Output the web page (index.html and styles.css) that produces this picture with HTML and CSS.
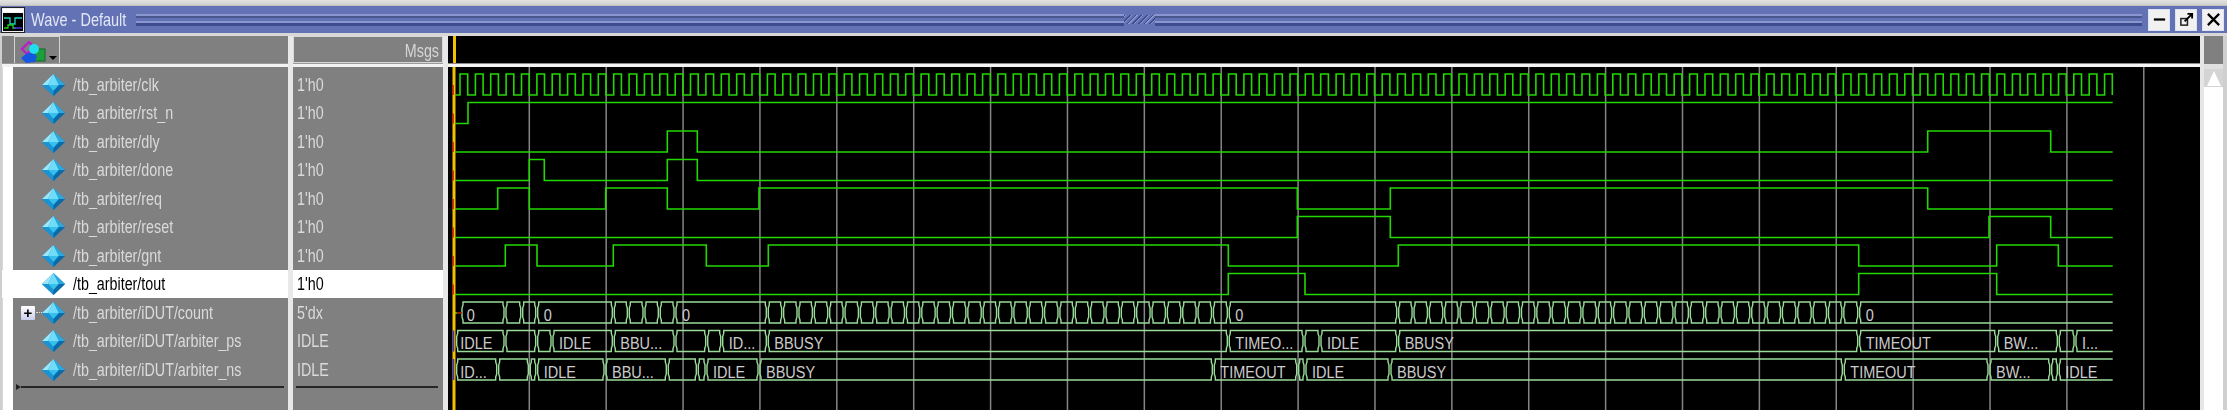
FILE: index.html
```html
<!DOCTYPE html>
<html lang="en">
<head>
    <meta charset="UTF-8">
    <title>Wave - Default</title>
    <link rel="stylesheet" href="styles.css">
</head>
<body>
    <svg class="defs" width="0" height="0">
        <symbol id="sig" viewBox="0 0 23 22">
            <polygon points="11.5,0 23,11 11.5,22 0,11" fill="#1284c4"/>
            <polygon points="11.5,0 17,11 6,11" fill="#6fdcf8"/>
            <polygon points="11.5,0 23,11 17,11" fill="#2aa8e0"/>
            <polygon points="11.5,0 0,11 6,11" fill="#9be6fb"/>
            <polygon points="6,11 17,11 11.5,17" fill="#35c0ee"/>
            <polygon points="0,11 6,11 11.5,17 11.5,22" fill="#1a93d2"/>
            <polygon points="23,11 17,11 11.5,17 11.5,22" fill="#0b6aa8"/>
        </symbol>
    </svg>

    <div id="wave" class="app">
        <div class="top-strip"></div>

        <div class="title-bar">
            <svg class="win-icon" viewBox="0 0 22 24">
                <rect width="22" height="24" fill="#eee"/>
                <rect x="1" y="5" width="20" height="18" fill="#000"/>
                <rect x="1" y="1" width="20" height="3" fill="#fff"/>
                <path d="M2 10h6v6h5v-6h7" fill="none" stroke="#19d6c8" stroke-width="1.3"/>
                <path d="M2 20h4v-3h5v3h3" fill="none" stroke="#1fd01f" stroke-width="1.3"/>
                <path d="M12 20h8" fill="none" stroke="#4a35e0" stroke-width="1.5"/>
            </svg>
            <span class="title">Wave - Default</span>
            <div class="grip"></div>
            <div class="grip-dots"></div>
            <div class="grip"></div>
            <div class="win-btns">
                <button class="win-btn">
                    <svg viewBox="0 0 16 16"><path d="M2 8h12" stroke="#000" stroke-width="2.4"/></svg>
                </button>
                <button class="win-btn">
                    <svg viewBox="0 0 16 16">
                        <rect x="2" y="7" width="7" height="7" fill="none" stroke="#222" stroke-width="1.6"/>
                        <path d="M6 10L14 2M9 2h5v5" fill="none" stroke="#000" stroke-width="2"/>
                    </svg>
                </button>
                <button class="win-btn">
                    <svg viewBox="0 0 16 16"><path d="M2 2l12 12M14 2L2 14" stroke="#000" stroke-width="2.4"/></svg>
                </button>
            </div>
        </div>

        <div class="panes">
            <!-- signal names -->
            <div class="col-names">
                <div class="col-head">
                    <div class="tool-btn">
                        <svg class="tool-icon" viewBox="0 0 26 22">
                            <rect x="12" y="8" width="13" height="12" fill="#1f9e3c" stroke="#0c6b22"/>
                            <polygon points="9,1 14,6 7,13 2,8" fill="none" stroke="#b522c8" stroke-width="2.4"/>
                            <polygon points="6,13 12,11 17,15 15,21 6,22 1,17" fill="#1557e0"/>
                            <circle cx="14" cy="8" r="5" fill="#22dcf0"/>
                        </svg>
                        <span class="tool-arrow"></span>
                    </div>
                </div>
                <div class="col-sep"></div>
                <div class="name-wrap">
                    <div class="name-list">
                        <div class="row"><svg class="icon"><use href="#sig"/></svg><span class="txt">/tb_arbiter/clk</span></div>
                        <div class="row"><svg class="icon"><use href="#sig"/></svg><span class="txt">/tb_arbiter/rst_n</span></div>
                        <div class="row"><svg class="icon"><use href="#sig"/></svg><span class="txt">/tb_arbiter/dly</span></div>
                        <div class="row"><svg class="icon"><use href="#sig"/></svg><span class="txt">/tb_arbiter/done</span></div>
                        <div class="row"><svg class="icon"><use href="#sig"/></svg><span class="txt">/tb_arbiter/req</span></div>
                        <div class="row"><svg class="icon"><use href="#sig"/></svg><span class="txt">/tb_arbiter/reset</span></div>
                        <div class="row"><svg class="icon"><use href="#sig"/></svg><span class="txt">/tb_arbiter/gnt</span></div>
                        <div class="row selected"><svg class="icon"><use href="#sig"/></svg><span class="txt">/tb_arbiter/tout</span></div>
                        <div class="row"><span class="expander">+</span><svg class="icon"><use href="#sig"/></svg><span class="txt">/tb_arbiter/iDUT/count</span></div>
                        <div class="row"><svg class="icon"><use href="#sig"/></svg><span class="txt">/tb_arbiter/iDUT/arbiter_ps</span></div>
                        <div class="row"><svg class="icon"><use href="#sig"/></svg><span class="txt">/tb_arbiter/iDUT/arbiter_ns</span></div>
                        <div class="end-line names-end"><span class="end-mark"></span><span class="rule"></span></div>
                    </div>
                </div>
            </div>

            <!-- values -->
            <div class="col-values">
                <div class="msgs-head"><span class="txt">Msgs</span></div>
                <div class="col-sep"></div>
                <div class="value-list">
                    <div class="row"><span class="txt">1'h0</span></div>
                    <div class="row"><span class="txt">1'h0</span></div>
                    <div class="row"><span class="txt">1'h0</span></div>
                    <div class="row"><span class="txt">1'h0</span></div>
                    <div class="row"><span class="txt">1'h0</span></div>
                    <div class="row"><span class="txt">1'h0</span></div>
                    <div class="row"><span class="txt">1'h0</span></div>
                    <div class="row selected"><span class="txt">1'h0</span></div>
                    <div class="row"><span class="txt">5'dx</span></div>
                    <div class="row"><span class="txt">IDLE</span></div>
                    <div class="row"><span class="txt">IDLE</span></div>
                    <div class="end-line"><span class="rule"></span></div>
                </div>
            </div>

            <!-- waveform -->
            <div class="col-wave">
                <div class="wave-head"><span class="cursor-top"></span></div>
                <div class="wave-sep"></div>
                <svg id="waves" class="waves" viewBox="448 67 1752 343"></svg>
            </div>

            <div class="scrollbar">
                <div class="thumb"></div>
                <div class="scroll-sep"></div>
                <div class="scroll-up"><span class="up-arrow"></span></div>
                <div class="trough"></div>
            </div>
        </div>
    </div>

    <script src="waves.js"></script>
</body>
</html>
```

FILE: styles.css
```css
/* Page */
body {
    margin: 0;
    width: 2227px;
    height: 410px;
    overflow: hidden;
    background: #d8d8d8;
    font-family: "Liberation Sans", Arial, sans-serif;
}

.defs {
    display: block;
    height: 0;
}

.app {
    display: flex;
    flex-direction: column;
    height: 410px;
    filter: blur(0.45px);
}

.top-strip {
    height: 6px;
    background: linear-gradient(#e2e2e2, #d4d4d4 70%, #bcbcbc);
}

/* Title bar */
.title-bar {
    display: flex;
    align-items: center;
    height: 27px;
    margin-bottom: 3px;
    padding-left: 2px;
    background: #6272b4;
}

.win-icon {
    width: 22px;
    height: 24px;
    outline: 1px solid #222;
}

.title {
    margin: 0 10px 0 7px;
    font-size: 14.5px;
    color: #e2e6f6;
    white-space: nowrap;
    transform: scaleY(1.25);
}

.grip {
    flex: 1;
    height: 12px;
    background: linear-gradient(#8a96cf 0 2px, #4a578f 2px 4px, #6272b4 4px 7px, #8a96cf 7px 9px, #3e4b8c 9px 12px);
}

.grip-dots {
    width: 31px;
    height: 9px;
    background: repeating-linear-gradient(135deg, #3e4b8c 0 1px, #8a96cf 1px 2px, #6272b4 2px 4px);
}

.win-btns {
    display: flex;
    gap: 5px;
    margin-left: 6px;
    margin-right: 3px;
}

.win-btn {
    display: flex;
    align-items: center;
    justify-content: center;
    width: 22px;
    height: 22px;
    padding: 0;
    border: 1px solid #dfe2f2;
    background: #f1f1f1;
}

.win-btn svg {
    width: 15px;
    height: 15px;
}

/* Panes */
.panes {
    flex: 1;
    display: flex;
    min-height: 0;
}

.col-names {
    width: 288px;
    display: flex;
    flex-direction: column;
    border-left: 2px solid #cfcfcf;
    box-sizing: border-box;
}

.col-head {
    height: 27px;
    padding-left: 12px;
    background: #808080;
}

.tool-btn {
    display: flex;
    width: 46px;
    height: 27px;
    box-sizing: border-box;
    border: 1px solid #d4d4d4;
    border-bottom: 0;
    padding: 4px 0 0 5px;
}

.tool-icon {
    width: 26px;
    height: 22px;
}

.tool-arrow {
    width: 0;
    height: 0;
    margin: 15px 0 0 3px;
    border-left: 4px solid transparent;
    border-right: 4px solid transparent;
    border-top: 4px solid #000;
}

.col-sep {
    height: 4px;
    box-sizing: border-box;
    border-top: 1px solid #9a9a9a;
    background: #f2f2f2;
}

.name-wrap {
    flex: 1;
    padding-left: 10px;
    margin-left: 1px;
    background: #fff;
    min-height: 0;
}

.name-list {
    height: 100%;
    padding-top: 3px;
    box-sizing: border-box;
    background: #808080;
}

.row {
    position: relative;
    display: flex;
    align-items: center;
    height: 28.5px;
    font-size: 14.3px;
    color: #dadada;
    white-space: nowrap;
}

.name-list .row {
    padding-left: 29px;
}

.row.selected {
    background: #fff;
    color: #000;
}

.name-list .row.selected {
    margin-left: -11px;
    padding-left: 40px;
}

.icon {
    width: 23px;
    height: 22px;
    margin-top: 1px;
    margin-right: 8px;
    flex: none;
}

.txt {
    display: inline-block;
    margin-top: 1px;
    transform: scaleY(1.25);
}

/* the + box sits over the tree line in front of the icon */
.expander {
    position: absolute;
    left: 8px;
    top: 8px;
    width: 14px;
    height: 14px;
    line-height: 13px;
    text-align: center;
    font-size: 15px;
    font-weight: bold;
    color: #000;
    background: linear-gradient(#fff, #c9cdea);
    border-radius: 1px;
}

.expander::after {
    content: "";
    position: absolute;
    left: 15px;
    top: 6px;
    width: 6px;
    border-top: 1px dotted #ddd;
}

.end-line {
    display: flex;
    align-items: center;
    height: 7px;
    margin: 0 4px 0 3px;
}

.names-end {
    margin-left: 3px;
}

.end-mark {
    flex: none;
    width: 0;
    height: 0;
    border-top: 3px solid transparent;
    border-bottom: 3px solid transparent;
    border-left: 5px solid #222;
}

.rule {
    flex: 1;
    height: 2px;
    background: #262626;
}

/* Values */
.col-values {
    width: 160px;
    display: flex;
    flex-direction: column;
    box-sizing: border-box;
    border-left: 5px solid #e8e8e8;
    border-right: 5px solid #e8e8e8;
}

.msgs-head {
    height: 27px;
    box-sizing: border-box;
    border: 1.5px solid #d8d8d8;
    padding-right: 3px;
    text-align: right;
    line-height: 26px;
    font-size: 14.3px;
    color: #d6d6d6;
    background: #808080;
}

.value-list {
    flex: 1;
    padding-top: 3px;
    background: #808080;
}

.value-list .row {
    padding-left: 4px;
}

.value-list .end-line {
    margin-right: 5px;
}

/* Waveform */
.col-wave {
    width: 1752px;
    display: flex;
    flex-direction: column;
    background: #000;
}

.wave-head {
    height: 27px;
    padding-left: 4.5px;
}

.cursor-top {
    display: block;
    width: 3px;
    height: 27px;
    background: #f2c200;
}

.wave-sep {
    height: 4px;
    box-sizing: border-box;
    border-top: 1px solid #8a8a8a;
    background: #f4f4f4;
}

.waves {
    display: block;
    width: 1752px;
    height: 343px;
}

.waves text {
    font-family: "Liberation Sans", Arial, sans-serif;
    font-size: 14.5px;
    fill: #cccccc;
}

/* Scrollbar */
.scrollbar {
    width: 27px;
    display: flex;
    flex-direction: column;
    box-sizing: border-box;
    border-left: 4px solid #e6e6e6;
    border-right: 4px solid #cfcfcf;
}

.thumb {
    height: 28px;
    background: #808080;
}

.scroll-sep {
    height: 5px;
    background: #e0e0e0;
}

.scroll-up {
    display: flex;
    justify-content: center;
    height: 18px;
    background: #d4d4d4;
}

.up-arrow {
    width: 0;
    height: 0;
    margin-top: 2px;
    border-left: 7px solid transparent;
    border-right: 7px solid transparent;
    border-bottom: 15px solid #fff;
}

.trough {
    flex: 1;
    background: #fff;
}
```

FILE: waves.js
```js
// Draws the waveform pane. All x values are page pixels, the svg viewBox starts at 448.
const svg = document.getElementById("waves");
const NS = "http://www.w3.org/2000/svg";

const END = 2112.7;
const START = 455.5;
const ROW_H = 28.5;
const FIRST_TOP = 74;
const SWING = 21;

function add(tag, attrs, text) {
    let el = document.createElementNS(NS, tag);
    for (let key in attrs) el.setAttribute(key, attrs[key]);
    if (text) el.textContent = text;
    svg.appendChild(el);
    return el;
}

function rowTop(i) {
    return FIRST_TOP + i * ROW_H;
}

// edges: x of every toggle, the signal starts low
function drawBit(i, edges) {
    let top = rowTop(i);
    let low = top + SWING;
    let y = low;
    let d = `M${START} ${low}`;
    edges.forEach(x => {
        d += `H${x}`;
        y = y === low ? top : low;
        d += `V${y}`;
    });
    d += `H${END}`;
    add("path", { d: d, fill: "none", stroke: "#22d800", "stroke-width": 1.6 });
}

function drawClock(i) {
    let edges = [];
    for (let k = 0; k < 216; k++) edges.push(460 + k * 7.685);
    let top = rowTop(i);
    let low = top + SWING;
    let y = low;
    let d = `M${START} ${low}`;
    edges.forEach(x => {
        y = y === low ? top : low;
        d += `H${x.toFixed(1)}V${y}`;
    });
    add("path", { d: d, fill: "none", stroke: "#22d800", "stroke-width": 1.6 });
}

// segs: [startX, label], each one runs to the start of the next
function drawBus(i, segs) {
    let top = rowTop(i);
    let bot = top + SWING;
    segs.forEach((seg, n) => {
        let a = seg[0];
        let last = n === segs.length - 1;
        let b = last ? END : segs[n + 1][0];
        let d = `M${b - 2} ${top}H${a + 2}V${top + 3}L${a + 1} ${top + 6}V${bot - 6}L${a + 2} ${bot - 3}V${bot}H${b - 2}`;
        if (last) d = `M${END} ${top}H${a + 2}V${top + 3}L${a + 1} ${top + 6}V${bot - 6}L${a + 2} ${bot - 3}V${bot}H${END}`;
        else d += `V${bot - 3}L${b - 1} ${bot - 6}V${top + 6}L${b - 2} ${top + 3}Z`;
        add("path", { d: d, fill: "none", stroke: "#98dc98", "stroke-width": 1.4 });
        if (seg[1]) {
            let pad = seg[2] || 7;
            add("text", { transform: `translate(${a + pad} ${top + 18.7}) scale(1 1.2)` }, seg[1]);
        }
    });
}

function periodic(from, count) {
    let list = [];
    for (let k = 0; k < count; k++) list.push([from + k * 15.35]);
    return list;
}

// grid lines
for (let k = 0; k < 22; k++) {
    let x = 529.3 + k * 76.88;
    add("line", { x1: x, x2: x, y1: 67, y2: 410, stroke: "#858585", "stroke-width": 1.5 });
}

drawClock(0);
drawBit(1, [468]);
drawBit(2, [667.3, 697.3, 1927.7, 2050.7]);
drawBit(3, [529.3, 544.3, 667.3, 697.3]);
drawBit(4, [497.7, 529.3, 605.7, 667.3, 759, 1297.3, 1390.3, 1927.7]);
drawBit(5, [1297.3, 1390.3, 1989, 2050.7]);
drawBit(6, [505.3, 537, 613.3, 706.3, 768.3, 1228.3, 1398.3, 1858.7, 1996.7, 2058.3]);
drawBit(7, [1228.3, 1305, 1858.7, 1996.7]);

drawBus(8, [
    [461, "0", 5.7], [505], [521.7], [536.7, "0"], [613.3], [628.3], [644], [659.3],
    [675, "0"], ...periodic(767.3, 30), [1228.3, "0"], ...periodic(1397.7, 30), [1858.7, "0"]
]);
drawBus(9, [
    [455.7, "IDLE", 4.5], [505], [536.7], [552, "IDLE"], [613.3, "BBU..."], [675], [706.7],
    [721.7, "ID..."], [767.3, "BBUSY"], [1228.3, "TIMEO..."], [1304], [1320, "IDLE"],
    [1397.7, "BBUSY"], [1858.7, "TIMEOUT"], [1996.7, "BW..."], [2058.3], [2075, "I..."]
]);
drawBus(10, [
    [455.7, "ID...", 4.5], [497.7], [529.3], [536.7, "IDLE"], [605, "BBU..."], [667.3], [697.3],
    [706, "IDLE"], [759, "BBUSY"], [1213.3, "TIMEOUT"], [1297.7], [1305, "IDLE"],
    [1390, "BBUSY"], [1843.3, "TIMEOUT"], [1989, "BW..."], [2050.7], [2058.3, "IDLE"]
]);

// stubs at time zero on the bus rows
add("path", { d: "M453 313H457", stroke: "#22d800", "stroke-width": 1.6 });
add("path", { d: "M457 313H462", stroke: "#c01808", "stroke-width": 1.6 });

// main cursor sits on top of the traces
add("rect", { x: 452.5, y: 67, width: 3, height: 343, fill: "#f2c200" });

for (let i = 0; i < 8; i++) {
    let top = rowTop(i);
    add("path", { d: `M453 ${top + 11}V${top + 21}`, stroke: "#c01808", "stroke-width": 1.6 });
}
[rowTop(9), rowTop(10)].forEach(top => {
    add("path", { d: `M453.5 ${top}V${top + 21}`, stroke: "#4030c8", "stroke-width": 1.6 });
});
```
